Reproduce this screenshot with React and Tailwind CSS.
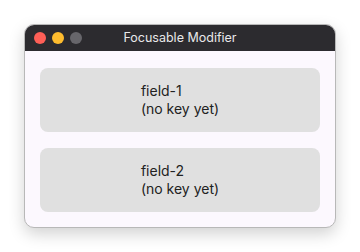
export default function App() {
  return (
    <div className="flex h-[252px] w-[360px] items-start justify-center bg-white pt-[24px]" style={{ fontFamily: "Inter, 'Noto Sans', sans-serif" }}>
      <div className="flex h-[204px] w-[312px] flex-col overflow-hidden rounded-[10px] border border-[#b8b8b8] bg-[#fcf8fe] shadow-[0_6px_16px_rgba(0,0,0,0.18)]">
        <div className="relative flex h-[26px] shrink-0 items-center bg-[#2c2b2f] px-[9px]">
          <div className="flex gap-[6px]">
            <span className="h-[12px] w-[12px] rounded-full bg-[#fe5f57]" />
            <span className="h-[12px] w-[12px] rounded-full bg-[#febc2e]" />
            <span className="h-[12px] w-[12px] rounded-full bg-[#67666b]" />
          </div>
          <div className="absolute inset-0 flex items-center justify-center text-[12.5px] text-[#e8e8ea]">
            Focusable Modifier
          </div>
        </div>
        <div className="flex flex-col gap-[16px] px-[15px] pt-[17px]">
          {["field-1", "field-2"].map((f) => (
            <div key={f} className="flex h-[64px] items-center justify-center rounded-[8px] bg-[#e0e0e0]">
              <div className="text-[14px] leading-[18px] text-[#222222]">
                <div>{f}</div>
                <div>(no key yet)</div>
              </div>
            </div>
          ))}
        </div>
      </div>
    </div>
  );
}
